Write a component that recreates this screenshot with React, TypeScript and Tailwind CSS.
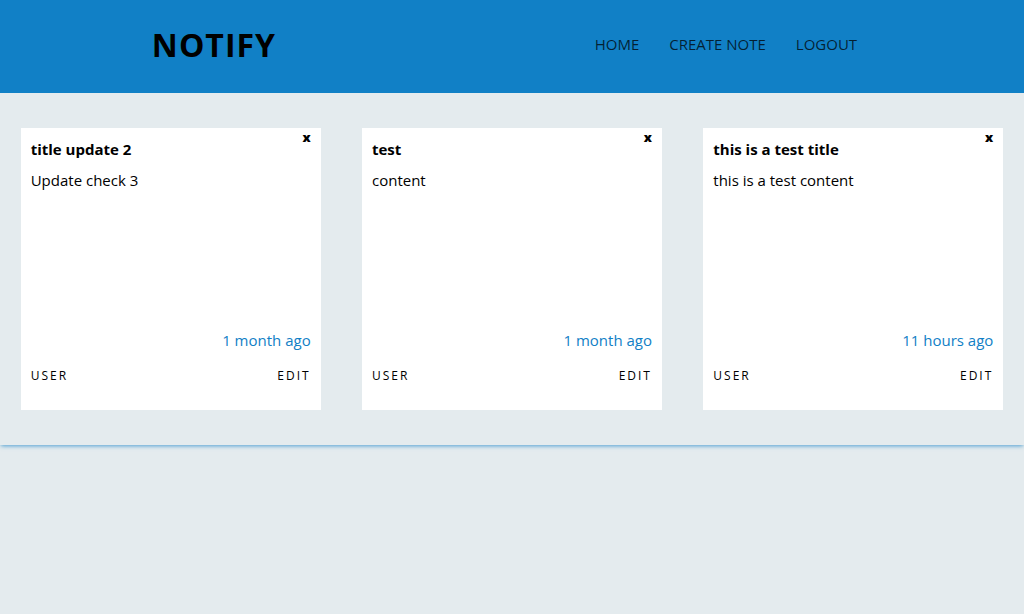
type Note = { id: number; title: string; content: string; age: string };

const notes: Note[] = [
  { id: 1, title: "title update 2", content: "Update check 3", age: "1 month ago" },
  { id: 2, title: "test", content: "content", age: "1 month ago" },
  { id: 3, title: "this is a test title", content: "this is a test content", age: "11 hours ago" },
];

function Header() {
  return (
    <header className="flex justify-around bg-[#1180c6] pt-6 pb-7">
      <h1 className="text-[32px] leading-[41px] font-bold tracking-[1px]">NOTIFY</h1>
      <nav className="flex items-center gap-[30px] px-[15px] text-[15px] text-black/75 uppercase">
        <a href="#home">Home</a>
        <a href="#create">Create note</a>
        <a href="#logout">Logout</a>
      </nav>
    </header>
  );
}

function NoteCard({ note }: { note: Note }) {
  return (
    <article className="relative flex h-[282px] w-[300px] flex-col bg-white px-[10px] pt-[9px] pb-6">
      <button type="button" aria-label="Delete note" className="absolute top-0 right-[10px] text-[13px] leading-[18px] font-extrabold">
        x
      </button>
      <h2 className="text-[15px] leading-6 font-bold">{note.title}</h2>
      <p className="mt-[7px] text-[15px] leading-6">{note.content}</p>
      <p className="mt-auto text-right text-[15px] leading-6 text-[#1180c6]">{note.age}</p>
      <footer className="mt-[14px] flex justify-between text-xs leading-5 tracking-[2px] uppercase">
        <span>User</span>
        <a href="#edit">Edit</a>
      </footer>
    </article>
  );
}

export default function App() {
  return (
    <div className="min-h-screen bg-[#e4ebee] font-['Open_Sans','Noto_Sans',sans-serif] text-black">
      <Header />
      <main className="flex flex-wrap justify-around gap-y-9 py-[35px] shadow-[0_2px_4px_-1px_#1180c6b3]">
        {notes.map((note) => (
          <NoteCard key={note.id} note={note} />
        ))}
      </main>
    </div>
  );
}
